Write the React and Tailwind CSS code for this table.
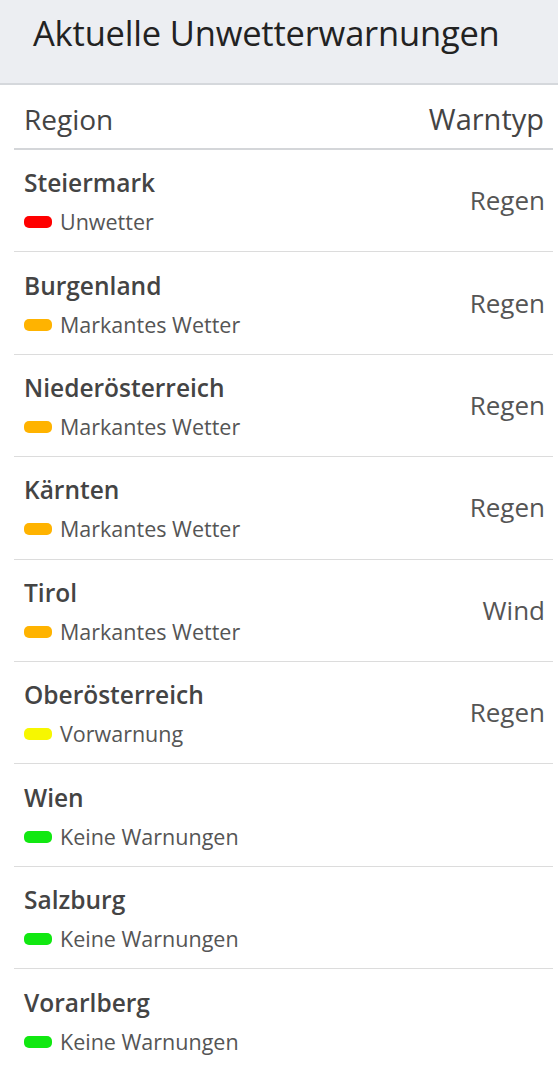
import React from "react";

const rows = [
    { region: "Steiermark", level: "Unwetter", color: "bg-[#ff0000]", type: "Regen" },
    { region: "Burgenland", level: "Markantes Wetter", color: "bg-[#ffb300]", type: "Regen" },
    { region: "Niederösterreich", level: "Markantes Wetter", color: "bg-[#ffb300]", type: "Regen" },
    { region: "Kärnten", level: "Markantes Wetter", color: "bg-[#ffb300]", type: "Regen" },
    { region: "Tirol", level: "Markantes Wetter", color: "bg-[#ffb300]", type: "Wind" },
    { region: "Oberösterreich", level: "Vorwarnung", color: "bg-[#f7f700]", type: "Regen" },
    { region: "Wien", level: "Keine Warnungen", color: "bg-[#11e811]", type: "" },
    { region: "Salzburg", level: "Keine Warnungen", color: "bg-[#11e811]", type: "" },
    { region: "Vorarlberg", level: "Keine Warnungen", color: "bg-[#11e811]", type: "" },
];

export default function App() {
    return (
        <div className="w-[558px] min-h-[1068px] bg-white font-['Open_Sans',sans-serif]">
            {/* Card header */}
            <div className="h-[85px] bg-[#eceef2] border-b-2 border-[#d5d8dc] px-[33px] pt-[10px]">
                <h1 className="text-[34.5px] leading-[46px] text-[#222] tracking-[-0.2px]">Aktuelle Unwetterwarnungen</h1>
            </div>

            {/* Table */}
            <div className="px-[14px] pr-[5px]">
                <div className="h-[65px] flex items-center justify-between px-[10px] pt-[4px] border-b-2 border-[#d4d6d9]">
                    <span className="text-[28px] text-[#444]">Region</span>
                    <span className="text-[29px] text-[#444] mr-[-1px]">Warntyp</span>
                </div>
                {rows.map((r) => (
                    <div key={r.region} className="h-[102.4px] flex items-center justify-between px-[10px] border-b border-[#dcdcdc] last:border-b-0">
                        <div className="flex flex-col pt-[2px]">
                            <span className="text-[24.5px] leading-[32px] font-semibold text-[#444]">{r.region}</span>
                            <span className="flex items-center gap-[8px] mt-[9px] text-[21.5px] leading-[28px] text-[#555]">
                                <span className={`w-[28px] h-[12px] rounded-[5px] ${r.color}`} />
                                {r.level}
                            </span>
                        </div>
                        <span className="text-[26px] text-[#555] mr-[-2px]">{r.type}</span>
                    </div>
                ))}
            </div>
        </div>
    );
}
